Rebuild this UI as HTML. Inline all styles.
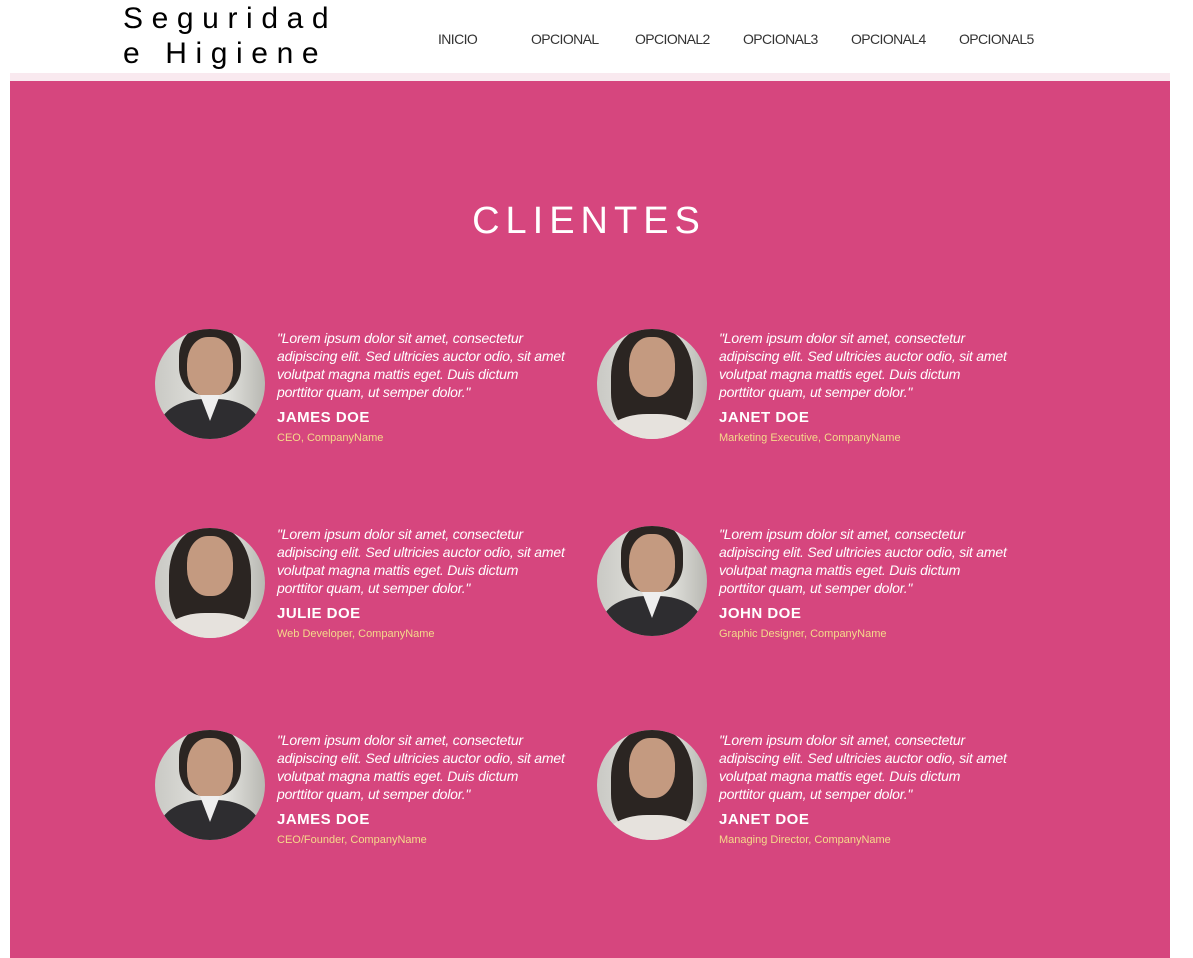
<!DOCTYPE html>
<html><head><meta charset="utf-8"><style>
*{margin:0;padding:0;box-sizing:border-box}
body{width:1193px;height:958px;background:#fff;font-family:"Liberation Sans",sans-serif;position:relative;overflow:hidden}
.logo{position:absolute;left:123px;top:1px;font-size:30px;letter-spacing:8.6px;line-height:35px;color:#000}
.nav{position:absolute;top:31px;font-size:14px;color:#333;letter-spacing:-0.6px}
.strip{position:absolute;left:10px;top:73px;width:1160px;height:8px;background:#f9e9ef}
.sec{position:absolute;left:10px;top:81px;width:1160px;height:877px;background:#d6467e}
h1{position:absolute;left:0;width:1178px;text-align:center;top:200px;color:#fff;font-size:38px;letter-spacing:6px;font-weight:normal}
.av{position:absolute;width:110px;height:110px;border-radius:50%;overflow:hidden;background:linear-gradient(90deg,#c9c9c4,#e8e8e4 60%,#b8b8b2)}
.av .hair{position:absolute;left:24px;top:-4px;width:62px;height:70px;border-radius:45% 45% 40% 40%;background:#2b2522}
.av .face{position:absolute;left:32px;top:8px;width:46px;height:60px;border-radius:45%;background:#c49a80}
.av .suit{position:absolute;left:5px;top:70px;width:100px;height:60px;border-radius:45% 45% 0 0;background:#2e2d30}
.av .shirt{position:absolute;left:45px;top:66px;width:20px;height:26px;background:#eee;clip-path:polygon(0 0,100% 0,50% 100%)}
.av.f .hair{left:14px;width:82px;height:110px;top:-2px}
.av.f .suit{background:#e6e2dd;top:85px}
.t{position:absolute;color:#fff;width:320px;white-space:nowrap}
.q{font-style:italic;font-size:14px;line-height:18px;letter-spacing:-0.2px}
.n{font-weight:bold;font-size:15px;margin-top:8px;letter-spacing:0.5px}
.r{font-size:11px;color:#f5d98a;margin-top:6px}
</style></head><body>
<div class="logo">Seguridad<br>e Higiene</div>
<div class="nav" style="left:438px">INICIO</div>
<div class="nav" style="left:531px">OPCIONAL</div>
<div class="nav" style="left:635px">OPCIONAL2</div>
<div class="nav" style="left:743px">OPCIONAL3</div>
<div class="nav" style="left:851px">OPCIONAL4</div>
<div class="nav" style="left:959px">OPCIONAL5</div>
<div class="strip"></div>
<div class="sec"></div>
<h1>CLIENTES</h1>

<div class="av" style="left:155px;top:329px"><div class="hair"></div><div class="face"></div><div class="suit"></div><div class="shirt"></div></div>
<div class="t" style="left:277px;top:329px"><div class="q">"Lorem ipsum dolor sit amet, consectetur<br>adipiscing elit. Sed ultricies auctor odio, sit amet<br>volutpat magna mattis eget. Duis dictum<br>porttitor quam, ut semper dolor."</div><div class="n">JAMES DOE</div><div class="r">CEO, CompanyName</div></div>

<div class="av f" style="left:597px;top:329px"><div class="hair"></div><div class="face"></div><div class="suit"></div></div>
<div class="t" style="left:719px;top:329px"><div class="q">"Lorem ipsum dolor sit amet, consectetur<br>adipiscing elit. Sed ultricies auctor odio, sit amet<br>volutpat magna mattis eget. Duis dictum<br>porttitor quam, ut semper dolor."</div><div class="n">JANET DOE</div><div class="r">Marketing Executive, CompanyName</div></div>

<div class="av f" style="left:155px;top:528px"><div class="hair"></div><div class="face"></div><div class="suit"></div></div>
<div class="t" style="left:277px;top:525px"><div class="q">"Lorem ipsum dolor sit amet, consectetur<br>adipiscing elit. Sed ultricies auctor odio, sit amet<br>volutpat magna mattis eget. Duis dictum<br>porttitor quam, ut semper dolor."</div><div class="n">JULIE DOE</div><div class="r">Web Developer, CompanyName</div></div>

<div class="av" style="left:597px;top:526px"><div class="hair"></div><div class="face"></div><div class="suit"></div><div class="shirt"></div></div>
<div class="t" style="left:719px;top:525px"><div class="q">"Lorem ipsum dolor sit amet, consectetur<br>adipiscing elit. Sed ultricies auctor odio, sit amet<br>volutpat magna mattis eget. Duis dictum<br>porttitor quam, ut semper dolor."</div><div class="n">JOHN DOE</div><div class="r">Graphic Designer, CompanyName</div></div>

<div class="av" style="left:155px;top:730px"><div class="hair"></div><div class="face"></div><div class="suit"></div><div class="shirt"></div></div>
<div class="t" style="left:277px;top:731px"><div class="q">"Lorem ipsum dolor sit amet, consectetur<br>adipiscing elit. Sed ultricies auctor odio, sit amet<br>volutpat magna mattis eget. Duis dictum<br>porttitor quam, ut semper dolor."</div><div class="n">JAMES DOE</div><div class="r">CEO/Founder, CompanyName</div></div>

<div class="av f" style="left:597px;top:730px"><div class="hair"></div><div class="face"></div><div class="suit"></div></div>
<div class="t" style="left:719px;top:731px"><div class="q">"Lorem ipsum dolor sit amet, consectetur<br>adipiscing elit. Sed ultricies auctor odio, sit amet<br>volutpat magna mattis eget. Duis dictum<br>porttitor quam, ut semper dolor."</div><div class="n">JANET DOE</div><div class="r">Managing Director, CompanyName</div></div>
</body></html>
